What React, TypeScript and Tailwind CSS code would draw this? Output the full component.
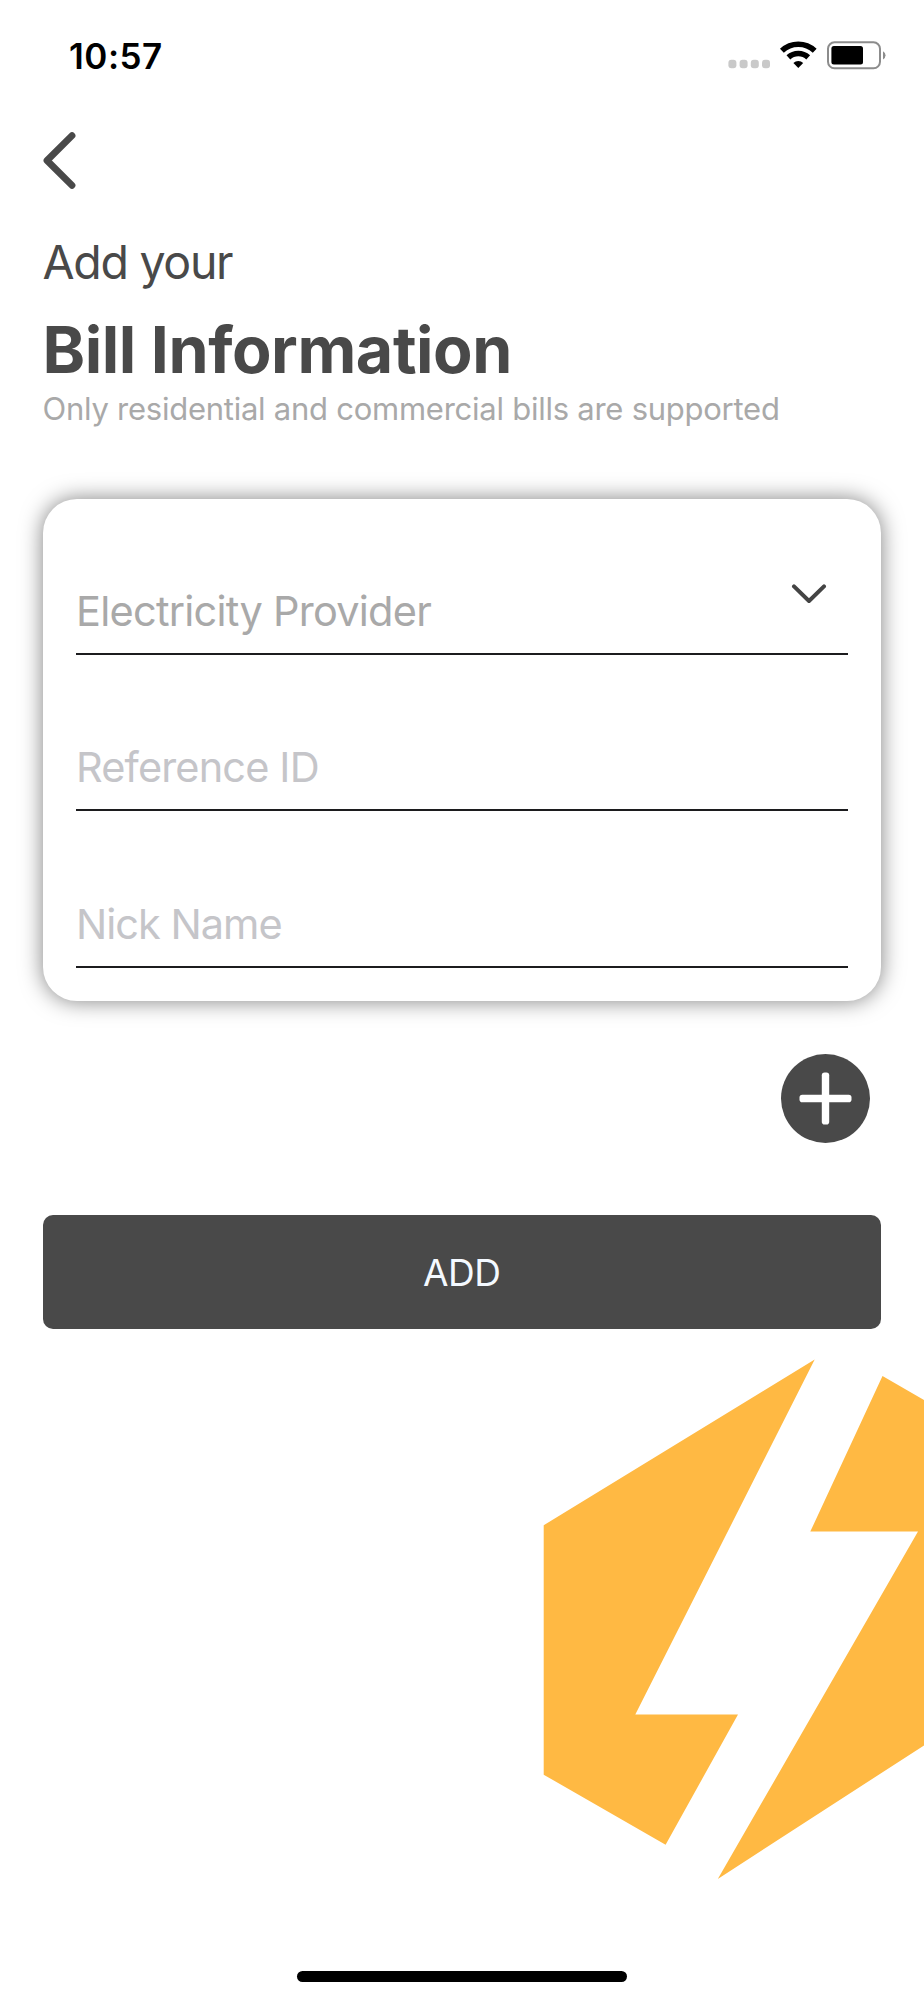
import React, { useState } from 'react';

const StatusBar = () => {
  return (
    <div className="flex items-center justify-between h-[111px] pl-[69px] pr-[38px]">
      <span className="mt-[2px] text-[35px] leading-none font-semibold tracking-[0.5px] text-black">10:57</span>
      <svg width="160" height="30" viewBox="0 0 160 30" className="-mt-[1px]">
        <g fill="#c9c9c9">
          <rect x="2.4" y="19.7" width="8" height="8.6" rx="3" />
          <rect x="13.6" y="19.7" width="8" height="8.6" rx="3" />
          <rect x="24.8" y="19.7" width="8" height="8.6" rx="3" />
          <rect x="36" y="19.7" width="8" height="8.6" rx="3" />
        </g>
        <g fill="none" stroke="#000" strokeWidth="5.6">
          <path d="M55.9 10.8a24 24 0 0 1 32.8 0" />
          <path d="M62.4 17.4a14.6 14.6 0 0 1 19.8 0" />
        </g>
        <path d="M67.4 23a7.3 7.3 0 0 1 9.8 0L72.3 28Z" fill="#000" />
        <rect x="102" y="2.3" width="52" height="26" rx="6.5" fill="none" stroke="#8c8c8c" strokeWidth="2" />
        <rect x="105.4" y="6" width="31.6" height="18.6" rx="2.5" fill="#000" />
        <path d="M157 11.2a4.6 4.6 0 0 1 0 8.2Z" fill="#8c8c8c" />
      </svg>
    </div>
  );
};

const Logo = () => {
  return (
    <svg width="404" height="560" viewBox="0 0 404 560" fill="#ffb943">
      <path d="M23.7 185.3 294.7 19.5 115.3 374.4H218L145.6 504.8 23.7 434.7Z" />
      <path d="M362.5 36 404 60V405.4L197.8 539 398 191.6H290.3Z" />
    </svg>
  );
};

const App = () => {
  const [provider, setProvider] = useState('');
  const [referenceId, setReferenceId] = useState('');
  const [nickName, setNickName] = useState('');

  return (
    <div className="w-[924px] h-[2000px] bg-white overflow-hidden font-[Inter,sans-serif] text-[#494949]">
      <StatusBar />

      <div className="pl-[42.5px] pr-[43px]">
        <button type="button" aria-label="Back" className="block mt-[21px]">
          <svg width="34" height="58" viewBox="0 0 34 58" fill="none" stroke="#494949" strokeWidth="6.8" strokeLinecap="round" strokeLinejoin="round">
            <path d="M29 3.7 4 28.5 29 53.3" />
          </svg>
        </button>

        <p className="mt-[42px] text-[46.5px] leading-[60px] tracking-[-1.3px]">Add your</p>
        <h1 className="mt-[22px] text-[64.5px] leading-[72px] font-bold tracking-[-0.43px]">Bill Information</h1>
        <p className="mt-[3px] text-[31px] leading-[40px] tracking-[-0.25px] text-[#a9a9a9] whitespace-nowrap">
          Only residential and commercial bills are supported
        </p>

        <form>
          <div className="mt-[69.5px] h-[502.5px] px-[33.5px] rounded-[34px] bg-white shadow-[0_0_22px_rgba(0,0,0,0.5)]">
            <div className="flex items-end h-[156.5px] pb-[17px] border-b-2 border-[#1c1c1e]">
              <input
                type="text"
                readOnly
                value={provider}
                onClick={() => setProvider('')}
                placeholder="Electricity Provider"
                className="flex-1 h-[50px] text-[41.5px] leading-[50px] tracking-[-0.75px] outline-none placeholder:text-[#a9a9a9]"
              />
              <svg width="36" height="20" viewBox="0 0 36 20" fill="none" stroke="#444" strokeWidth="4" strokeLinecap="round" strokeLinejoin="round" className="mr-[20.5px] mb-[32px]">
                <path d="M3 2.4 18 17 33 2.4" />
              </svg>
            </div>
            <div className="flex items-end h-[156px] pb-[17px] border-b-2 border-[#1c1c1e]">
              <input
                type="text"
                value={referenceId}
                onChange={(e) => setReferenceId(e.target.value)}
                placeholder="Reference ID"
                className="flex-1 h-[50px] text-[41.5px] leading-[50px] tracking-[-0.85px] outline-none placeholder:text-[#c5c5c9]"
              />
            </div>
            <div className="flex items-end h-[156.5px] pb-[17px] border-b-2 border-[#1c1c1e]">
              <input
                type="text"
                value={nickName}
                onChange={(e) => setNickName(e.target.value)}
                placeholder="Nick Name"
                className="flex-1 h-[50px] text-[41.5px] leading-[50px] tracking-[-1px] outline-none placeholder:text-[#c5c5c9]"
              />
            </div>
          </div>

          <div className="flex justify-end mt-[52.5px] pr-[11px]">
            <button type="button" aria-label="Add another bill">
              <svg width="89" height="89" viewBox="0 0 89 89">
                <circle cx="44.5" cy="44.5" r="44.5" fill="#494949" />
                <rect x="18.5" y="40.8" width="52" height="7.4" rx="2.8" fill="#fff" />
                <rect x="40.8" y="18.5" width="7.4" height="52" rx="2.8" fill="#fff" />
              </svg>
            </button>
          </div>

          <button type="button" className="block w-full h-[114px] mt-[72px] rounded-[10px] bg-[#494949] text-[37px] leading-[116px] tracking-[-0.4px] text-[#f4f9ff]">
            ADD
          </button>
        </form>
      </div>

      <div className="flex justify-end mt-[11px]">
        <Logo />
      </div>

      <div className="w-[330px] h-[11px] mt-[71px] mx-auto rounded-full bg-black" />
    </div>
  );
};

export default App;
